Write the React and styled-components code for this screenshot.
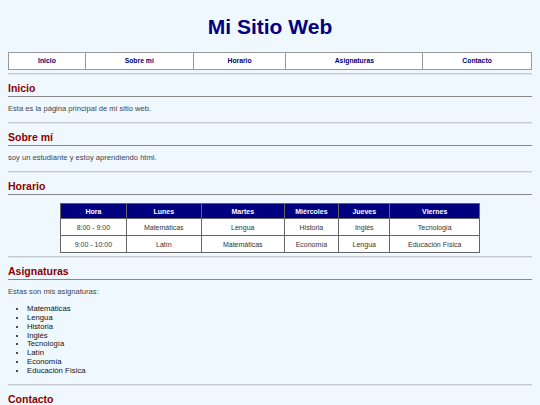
import React from 'react';
import styled, { createGlobalStyle } from 'styled-components';

// Styles
const GlobalStyle = createGlobalStyle`
body {
  margin: 8px;
  background-color: #f0f8ff;
  font-family: "Liberation Sans", Arial, sans-serif;
}
`;

const Title = styled.h1`
  margin: 7px 0 13px;
  text-align: center;
  font-size: 21px;
  line-height: 24px;
  color: #000080;
`;

const Nav = styled.nav`
  display: grid;
  grid-template-columns: 76fr 108fr 93fr 137fr 109fr;
  border: 1px solid #999;
  background-color: #fff;
`;

const NavItem = styled.a`
  height: 16px;
  line-height: 16px;
  text-align: center;
  font-size: 6.8px;
  font-weight: bold;
  color: #000080;
  text-decoration: none;
  border-left: ${(p) => (p.$first ? 'none' : '1px solid #999')};
`;

const Rule = styled.hr`
  margin: 3px 0 0;
  height: 0;
  border: none;
  border-top: 1px solid #c6cbd2;
  border-bottom: 1px solid #dfe4ea;
`;

const Heading = styled.h2`
  margin: 7px 0 0;
  padding-bottom: 2px;
  font-size: 10.5px;
  line-height: 12px;
  color: #8b0000;
  border-bottom: 1px solid #888;
`;

const Text = styled.p`
  margin: 7px 0 9px;
  font-size: 7.6px;
  line-height: 9px;
  color: #444;
`;

const Schedule = styled.table`
  width: 420px;
  margin: 8px auto 3px;
  border-collapse: collapse;
  border: 1px solid #666;
  background-color: #fff;
  font-size: 7px;
  color: #333;
`;

const Th = styled.th`
  height: 14px;
  padding: 0;
  background-color: #000080;
  color: #fff;
  font-weight: bold;
  border: 1px solid #666;
  width: ${(p) => p.$w}px;
`;

const Td = styled.td`
  height: 16px;
  padding: 0;
  text-align: center;
  border: 1px solid #666;
`;

const List = styled.ul`
  margin: 7px 0 8px;
  padding-left: 19px;
  font-size: 7.7px;
  line-height: 8.86px;
  color: #111;
`;

const sections = ['Inicio', 'Sobre mí', 'Horario', 'Asignaturas', 'Contacto'];

const columns = [
  ['Hora', 66],
  ['Lunes', 75],
  ['Martes', 83],
  ['Miércoles', 54],
  ['Jueves', 51],
  ['Viernes', 90],
];

const rows = [
  ['8:00 - 9:00', 'Matemáticas', 'Lengua', 'Historia', 'Inglés', 'Tecnología'],
  ['9:00 - 10:00', 'Latín', 'Matemáticas', 'Economía', 'Lengua', 'Educación Física'],
];

const subjects = ['Matemáticas', 'Lengua', 'Historia', 'Inglés', 'Tecnología', 'Latín', 'Economía', 'Educación Física'];

export default function App() {
  return (
    <>
      <GlobalStyle />
      <Title>Mi Sitio Web</Title>
      <Nav>
        {sections.map((s, i) => (
          <NavItem key={s} href={'#' + i} $first={i === 0}>{s}</NavItem>
        ))}
      </Nav>

      <Rule />
      <Heading>Inicio</Heading>
      <Text>Esta es la página principal de mi sitio web.</Text>

      <Rule />
      <Heading>Sobre mí</Heading>
      <Text>soy un estudiante y estoy aprendiendo html.</Text>

      <Rule />
      <Heading>Horario</Heading>
      <Schedule>
        <thead>
          <tr>
            {columns.map(([c, w]) => (
              <Th key={c} $w={w}>{c}</Th>
            ))}
          </tr>
        </thead>
        <tbody>
          {rows.map((r) => (
            <tr key={r[0]}>
              {r.map((c, i) => (
                <Td key={i}>{c}</Td>
              ))}
            </tr>
          ))}
        </tbody>
      </Schedule>

      <Rule />
      <Heading>Asignaturas</Heading>
      <Text>Estas son mis asignaturas:</Text>
      <List>
        {subjects.map((s) => (
          <li key={s}>{s}</li>
        ))}
      </List>

      <Rule />
      <Heading>Contacto</Heading>
    </>
  );
}
